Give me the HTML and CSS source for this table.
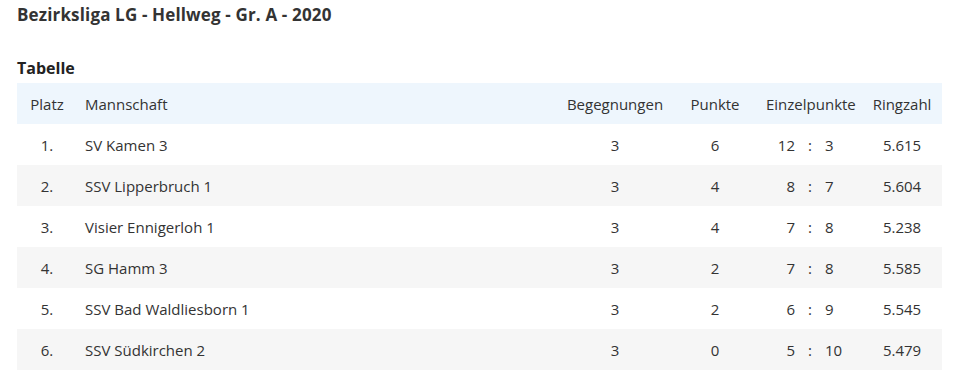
FILE: index.html
```html
<!DOCTYPE html>
<html lang="de">
<head>
<meta charset="utf-8">
<title>Bezirksliga LG - Hellweg - Gr. A - 2020</title>
<link rel="stylesheet" href="styles.css">
</head>
<body>
<div class="page">
  <h1 class="title">Bezirksliga LG - Hellweg - Gr. A - 2020</h1>
  <h2 class="subtitle">Tabelle</h2>
  <table class="standings">
    <colgroup>
      <col class="c-platz"><col class="c-team"><col class="c-beg"><col class="c-pkt"><col class="c-ez"><col class="c-ring">
    </colgroup>
    <thead>
      <tr>
        <th class="center">Platz</th>
        <th class="left">Mannschaft</th>
        <th class="center">Begegnungen</th>
        <th class="center">Punkte</th>
        <th class="center">Einzelpunkte</th>
        <th class="center">Ringzahl</th>
      </tr>
    </thead>
    <tbody>
      <tr><td class="center">1.</td><td class="left">SV Kamen 3</td><td class="center">3</td><td class="center">6</td><td><div class="ez"><span class="ez-l">12</span><span>:</span><span class="ez-r">3</span></div></td><td class="center">5.615</td></tr>
      <tr><td class="center">2.</td><td class="left">SSV Lipperbruch 1</td><td class="center">3</td><td class="center">4</td><td><div class="ez"><span class="ez-l">8</span><span>:</span><span class="ez-r">7</span></div></td><td class="center">5.604</td></tr>
      <tr><td class="center">3.</td><td class="left">Visier Ennigerloh 1</td><td class="center">3</td><td class="center">4</td><td><div class="ez"><span class="ez-l">7</span><span>:</span><span class="ez-r">8</span></div></td><td class="center">5.238</td></tr>
      <tr><td class="center">4.</td><td class="left">SG Hamm 3</td><td class="center">3</td><td class="center">2</td><td><div class="ez"><span class="ez-l">7</span><span>:</span><span class="ez-r">8</span></div></td><td class="center">5.585</td></tr>
      <tr><td class="center">5.</td><td class="left">SSV Bad Waldliesborn 1</td><td class="center">3</td><td class="center">2</td><td><div class="ez"><span class="ez-l">6</span><span>:</span><span class="ez-r">9</span></div></td><td class="center">5.545</td></tr>
      <tr><td class="center">6.</td><td class="left">SSV Südkirchen 2</td><td class="center">3</td><td class="center">0</td><td><div class="ez"><span class="ez-l">5</span><span>:</span><span class="ez-r">10</span></div></td><td class="center">5.479</td></tr>
    </tbody>
  </table>
</div>
</body>
</html>
```
FILE: styles.css
```css
html, body {
  margin: 0;
  padding: 0;
  background: #ffffff;
}
body {
  font-family: "Open Sans", "Liberation Sans", sans-serif;
  color: #333333;
}
.page {
  padding: 4px 13px 0 17px;
}
.title {
  margin: 0;
  font-size: 17px;
  line-height: 22px;
  letter-spacing: 0.15px;
  font-weight: 700;
  color: #333333;
}
.subtitle {
  margin: 31px 0 0 0;
  font-size: 16px;
  line-height: 22px;
  font-weight: 700;
  color: #222222;
}
.standings {
  width: 925px;
  border-collapse: collapse;
  table-layout: fixed;
  font-size: 15px;
  margin-top: 4px;
}
.c-platz { width: 60px; }
.c-team { width: 481px; }
.c-beg { width: 114px; }
.c-pkt { width: 86px; }
.c-ez { width: 104px; }
.c-ring { width: 80px; }
.standings th,
.standings td {
  height: 41px;
  padding: 0 8px;
  box-sizing: border-box;
  font-weight: 400;
  vertical-align: middle;
  white-space: nowrap;
}
.standings thead tr {
  background: #eef6fd;
}
.standings tbody tr:nth-child(even) {
  background: #f6f6f6;
}
.center { text-align: center; }
.left { text-align: left; }
.ez {
  display: grid;
  grid-template-columns: 1fr auto 1fr;
  column-gap: 13px;
}
.ez-l { text-align: right; }
.ez-r { text-align: left; }
```
